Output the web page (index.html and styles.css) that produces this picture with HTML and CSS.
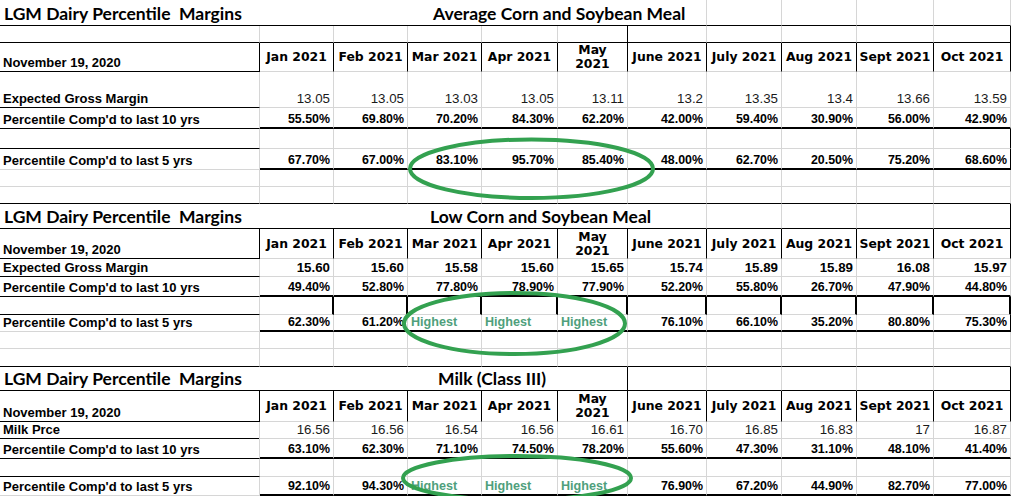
FILE: index.html
```html
<!DOCTYPE html>
<html>
<head>
<meta charset="utf-8">
<title>LGM Dairy Percentile Margins</title>
<link rel="stylesheet" href="styles.css">
</head>
<body>
<div class="sheet">
  <!-- Section 1 -->
  <div class="row h26 bk">
    <div class="c title s7"><span class="t1">LGM Dairy Percentile  Margins</span><span class="t2 avg">Average Corn and Soybean Meal</span></div>
    <div class="c"></div><div class="c"></div><div class="c"></div><div class="c"></div>
  </div>
  <div class="row h17 bk">
    <div class="c"></div><div class="c"></div><div class="c"></div><div class="c"></div><div class="c"></div><div class="c br"></div><div class="c"></div><div class="c"></div><div class="c"></div><div class="c"></div><div class="c br"></div>
  </div>
  <div class="row h29">
    <div class="c l bb br">November 19, 2020</div>
    <div class="c m">Jan 2021</div><div class="c m">Feb 2021</div><div class="c m">Mar 2021</div><div class="c m">Apr 2021</div><div class="c m">May<br>2021</div><div class="c m">June 2021</div><div class="c m">July 2021</div><div class="c m">Aug 2021</div><div class="c m">Sept 2021</div><div class="c m">Oct 2021</div>
  </div>
  <div class="row h36">
    <div class="c l bb">Expected Gross Margin</div>
    <div class="c n">13.05</div><div class="c n">13.05</div><div class="c n">13.03</div><div class="c n">13.05</div><div class="c n">13.11</div><div class="c n">13.2</div><div class="c n">13.35</div><div class="c n">13.4</div><div class="c n">13.66</div><div class="c n">13.59</div>
  </div>
  <div class="row h21">
    <div class="c l bb">Percentile Comp'd to last 10 yrs</div>
    <div class="c bb2">55.50%</div><div class="c bb2">69.80%</div><div class="c bb2">70.20%</div><div class="c bb2">84.30%</div><div class="c bb2">62.20%</div><div class="c bb2">42.00%</div><div class="c bb2">59.40%</div><div class="c bb2">30.90%</div><div class="c bb2">56.00%</div><div class="c bb2">42.90%</div>
  </div>
  <div class="row h20">
    <div class="c bb"></div><div class="c"></div><div class="c"></div><div class="c"></div><div class="c"></div><div class="c"></div><div class="c"></div><div class="c"></div><div class="c"></div><div class="c"></div><div class="c br"></div>
  </div>
  <div class="row h21">
    <div class="c l">Percentile Comp'd to last 5 yrs</div>
    <div class="c bb2">67.70%</div><div class="c bb2">67.00%</div><div class="c bb2">83.10%</div><div class="c bb2">95.70%</div><div class="c bb2">85.40%</div><div class="c bb2">48.00%</div><div class="c bb2">62.70%</div><div class="c bb2">20.50%</div><div class="c bb2">75.20%</div><div class="c bb2 br">68.60%</div>
  </div>
  <div class="row h17">
    <div class="c"></div><div class="c"></div><div class="c"></div><div class="c"></div><div class="c"></div><div class="c"></div><div class="c"></div><div class="c"></div><div class="c"></div><div class="c"></div><div class="c"></div>
  </div>
  <div class="row h17 bk">
    <div class="c"></div><div class="c"></div><div class="c"></div><div class="c"></div><div class="c"></div><div class="c"></div><div class="c"></div><div class="c"></div><div class="c"></div><div class="c"></div><div class="c"></div>
  </div>

  <!-- Section 2 -->
  <div class="row h25 bk">
    <div class="c title s7"><span class="t1">LGM Dairy Percentile  Margins</span><span class="t2">Low Corn and Soybean Meal</span></div>
    <div class="c"></div><div class="c"></div><div class="c"></div><div class="c br"></div>
  </div>
  <div class="row h30">
    <div class="c l bb br">November 19, 2020</div>
    <div class="c m">Jan 2021</div><div class="c m">Feb 2021</div><div class="c m">Mar 2021</div><div class="c m">Apr 2021</div><div class="c m">May<br>2021</div><div class="c m">June 2021</div><div class="c m">July 2021</div><div class="c m">Aug 2021</div><div class="c m">Sept 2021</div><div class="c m">Oct 2021</div>
  </div>
  <div class="row h18">
    <div class="c l bb">Expected Gross Margin</div>
    <div class="c nb">15.60</div><div class="c nb">15.60</div><div class="c nb">15.58</div><div class="c nb">15.60</div><div class="c nb">15.65</div><div class="c nb">15.74</div><div class="c nb">15.89</div><div class="c nb">15.89</div><div class="c nb">16.08</div><div class="c nb">15.97</div>
  </div>
  <div class="row h20">
    <div class="c l bb">Percentile Comp'd to last 10 yrs</div>
    <div class="c bb2">49.40%</div><div class="c bb2">52.80%</div><div class="c bb2">77.80%</div><div class="c bb2">78.90%</div><div class="c bb2">77.90%</div><div class="c bb2">52.20%</div><div class="c bb2">55.80%</div><div class="c bb2">26.70%</div><div class="c bb2">47.90%</div><div class="c bb2">44.80%</div>
  </div>
  <div class="row h18">
    <div class="c bb"></div><div class="c br2"></div><div class="c br2"></div><div class="c br2"></div><div class="c br2"></div><div class="c br2"></div><div class="c br2"></div><div class="c br2"></div><div class="c br2"></div><div class="c br2"></div><div class="c br2"></div>
  </div>
  <div class="row h17">
    <div class="c l">Percentile Comp'd to last 5 yrs</div>
    <div class="c bb2">62.30%</div><div class="c bb2">61.20%</div><div class="c bb2 hi">Highest</div><div class="c bb2 hi">Highest</div><div class="c bb2 hi">Highest</div><div class="c bb2">76.10%</div><div class="c bb2">66.10%</div><div class="c bb2">35.20%</div><div class="c bb2">80.80%</div><div class="c bb2 br">75.30%</div>
  </div>
  <div class="row h17">
    <div class="c"></div><div class="c"></div><div class="c"></div><div class="c"></div><div class="c"></div><div class="c"></div><div class="c"></div><div class="c"></div><div class="c"></div><div class="c"></div><div class="c"></div>
  </div>
  <div class="row h18 bk">
    <div class="c"></div><div class="c"></div><div class="c"></div><div class="c"></div><div class="c"></div><div class="c"></div><div class="c"></div><div class="c"></div><div class="c"></div><div class="c"></div><div class="c"></div>
  </div>

  <!-- Section 3 -->
  <div class="row h24 bk">
    <div class="c title s6 br"><span class="t1">LGM Dairy Percentile  Margins</span><span class="t2 milk">Milk (Class III)</span></div>
    <div class="c"></div><div class="c"></div><div class="c"></div><div class="c"></div><div class="c br"></div>
  </div>
  <div class="row h31">
    <div class="c l bb br">November 19, 2020</div>
    <div class="c m">Jan 2021</div><div class="c m">Feb 2021</div><div class="c m">Mar 2021</div><div class="c m">Apr 2021</div><div class="c m">May<br>2021</div><div class="c m">June 2021</div><div class="c m">July 2021</div><div class="c m">Aug 2021</div><div class="c m">Sept 2021</div><div class="c m">Oct 2021</div>
  </div>
  <div class="row h16">
    <div class="c l bb">Milk Prce</div>
    <div class="c n">16.56</div><div class="c n">16.56</div><div class="c n">16.54</div><div class="c n">16.56</div><div class="c n">16.61</div><div class="c n">16.70</div><div class="c n">16.85</div><div class="c n">16.83</div><div class="c n">17</div><div class="c n">16.87</div>
  </div>
  <div class="row h21">
    <div class="c l bb">Percentile Comp'd to last 10 yrs</div>
    <div class="c bb2">63.10%</div><div class="c bb2">62.30%</div><div class="c bb2">71.10%</div><div class="c bb2">74.50%</div><div class="c bb2">78.20%</div><div class="c bb2">55.60%</div><div class="c bb2">47.30%</div><div class="c bb2">31.10%</div><div class="c bb2">48.10%</div><div class="c bb2">41.40%</div>
  </div>
  <div class="row h18">
    <div class="c bb"></div><div class="c"></div><div class="c"></div><div class="c"></div><div class="c"></div><div class="c"></div><div class="c"></div><div class="c"></div><div class="c"></div><div class="c"></div><div class="c"></div>
  </div>
  <div class="row h19">
    <div class="c l">Percentile Comp'd to last 5 yrs</div>
    <div class="c bb2">92.10%</div><div class="c bb2">94.30%</div><div class="c bb2 hi">Highest</div><div class="c bb2 hi">Highest</div><div class="c bb2 hi">Highest</div><div class="c bb2">76.90%</div><div class="c bb2">67.20%</div><div class="c bb2">44.90%</div><div class="c bb2">82.70%</div><div class="c bb2">77.00%</div>
  </div>
</div>

<svg class="marks" width="1012" height="496" viewBox="0 0 1012 496" aria-hidden="true">
  <ellipse cx="531.5" cy="168.7" rx="121.5" ry="29.3"/>
  <ellipse cx="514.5" cy="323.5" rx="110.5" ry="30.5"/>
  <ellipse cx="517" cy="478" rx="114" ry="22"/>
</svg>
</body>
</html>
```

FILE: styles.css
```css
html, body {
  margin: 0;
  background: #fff;
}

body {
  position: relative;
  width: 1012px;
  height: 496px;
  overflow: hidden;
  font-family: "Liberation Sans", Arial, sans-serif;
  color: #000;
}

.sheet {
  width: 1011px;
}

.row {
  display: grid;
  grid-template-columns: 260px 74px 74px 74px 76px 70px 79px 75px 75px 77px 77px;
}

.h16 { height: 16px; }
.h17 { height: 17px; }
.h18 { height: 18px; }
.h19 { height: 19px; }
.h20 { height: 20px; }
.h21 { height: 21px; }
.h24 { height: 24px; }
.h25 { height: 25px; }
.h26 { height: 26px; }
.h29 { height: 29px; }
.h30 { height: 30px; }
.h31 { height: 31px; }
.h36 { height: 36px; }

.c {
  box-sizing: border-box;
  min-width: 0;
  display: flex;
  align-items: flex-end;
  justify-content: flex-end;
  padding: 0 3px 1px 0;
  border-right: 1px solid #d6d6d6;
  border-bottom: 1px solid #d6d6d6;
  font-size: 12.4px;
  font-weight: 700;
  line-height: 14px;
  white-space: nowrap;
}

.row.bk > .c { border-bottom-color: #000; }
.bb { border-bottom-color: #000; }
.bb2 { border-bottom: 2px solid #000; }
.br { border-right-color: #000; }
.br2 { border-right: 2px solid #000; }

.s6 { grid-column: span 6; }
.s7 { grid-column: span 7; }

/* section title rows */
.title {
  justify-content: flex-start;
  padding: 0 0 1px 4px;
  font-family: Lato, "Open Sans", sans-serif;
  font-size: 17.5px;
  line-height: 20px;
  white-space: pre;
}
.t1 { width: 426px; flex: none; }
.t2.avg { margin-left: 3px; }
.t2.milk { margin-left: 8px; }

/* row labels */
.l {
  justify-content: flex-start;
  padding-left: 3px;
  font-size: 13px;
  line-height: 15px;
}

/* month header cells */
.m {
  justify-content: center;
  align-items: center;
  text-align: center;
  padding: 0;
  border-right-color: #000;
  font-family: "DejaVu Sans", Verdana, sans-serif;
  font-size: 12.4px;
  line-height: 14px;
}

/* plain numbers */
.n {
  font-weight: 400;
  font-size: 13.3px;
  line-height: 15px;
  color: #1a1a1a;
}
.nb {
  font-size: 13.3px;
  line-height: 15px;
}

.hi {
  justify-content: flex-start;
  padding-left: 3px;
  color: #4f9f7c;
  font-size: 12.6px;
}

.marks {
  position: absolute;
  left: 0;
  top: 0;
  pointer-events: none;
}
.marks ellipse {
  fill: none;
  stroke: #33a150;
  stroke-width: 4;
}
```
